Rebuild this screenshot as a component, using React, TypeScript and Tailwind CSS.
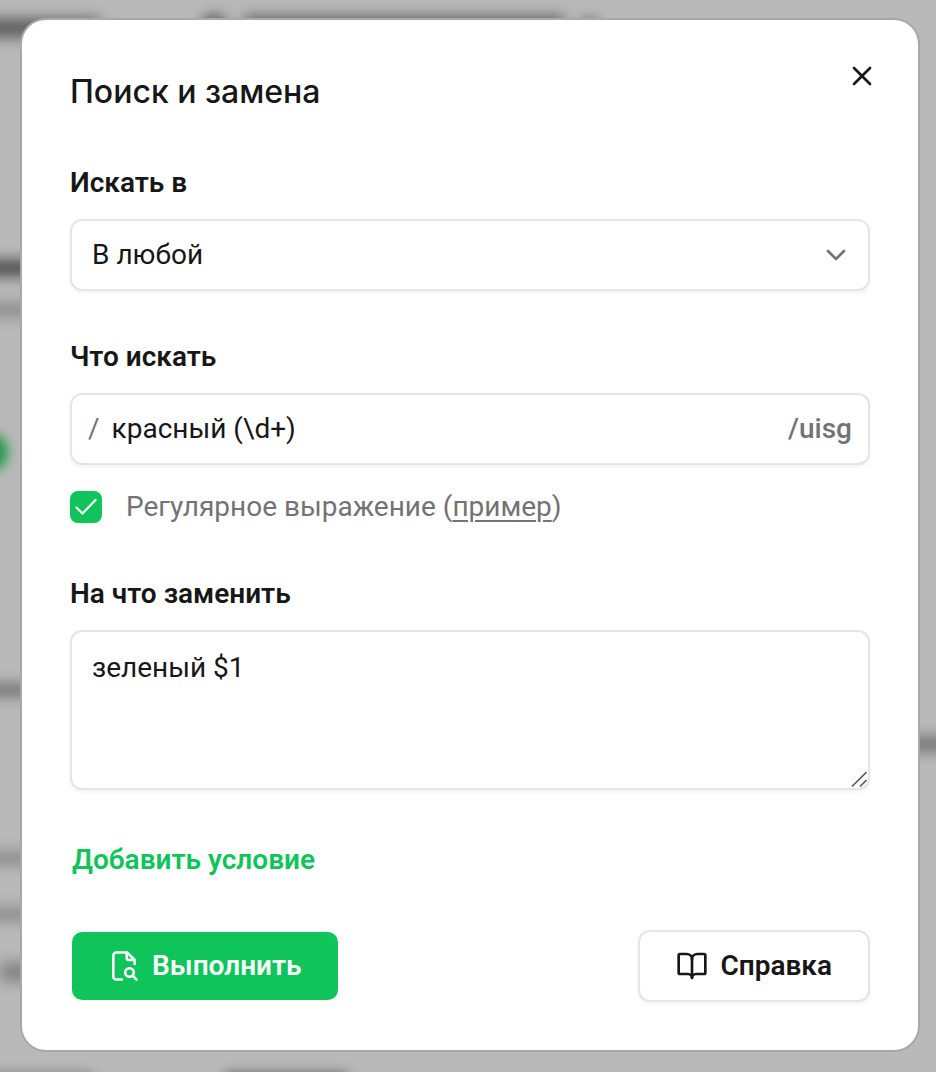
import { useId, useState } from "react";
import { BookOpen, ChevronDown, X } from "lucide-react";

const fieldBox =
  "rounded-xl border-2 border-[#e5e5e5] bg-white shadow-[0_2px_4px_rgba(0,0,0,0.05)]";
const labelText = "text-[28px] leading-9 font-semibold";

function FileSearchIcon() {
  return (
    <svg
      width="32"
      height="32"
      viewBox="0 0 32 32"
      fill="none"
      stroke="currentColor"
      strokeWidth="2.6"
      strokeLinecap="round"
      strokeLinejoin="round"
      aria-hidden="true"
    >
      <path d="M14 29.500H8.300A3 3 0 0 1 5.300 26.500V5.500A3 3 0 0 1 8.300 2.500H19L26.700 10V14" />
      <path d="M18.700 2.800V8A2 2 0 0 0 20.700 10H26.500" />
      <circle cx="21.500" cy="22.500" r="4.300" />
      <path d="M24.700 25.700L28.500 29.600" />
    </svg>
  );
}

function Backdrop() {
  return (
    <div className="absolute inset-0 overflow-hidden bg-[#b9b9b9]" aria-hidden="true">
      <div className="absolute -left-5 top-5 h-4 w-30 bg-[#4a4a4a] blur-[8px]" />
      <div className="absolute left-51 top-4 h-5 w-5 bg-[#4a4a4a] blur-[7px]" />
      <div className="absolute left-61 top-4 h-5 w-80 bg-[#606060] blur-[7px]" />
      <div className="absolute left-[580px] top-4 h-2 w-5 bg-[#888888] blur-[5px]" />
      <div className="absolute -left-5 top-65 h-4 w-20 bg-[#484848] blur-[7px]" />
      <div className="absolute -left-5 top-76 h-3 w-20 bg-[#858585] blur-[7px]" />
      <div className="absolute -left-8 top-108 size-10 rounded-full bg-[#22994b] blur-[6px]" />
      <div className="absolute -left-5 top-171 h-3 w-20 bg-[#6c6c6c] blur-[7px]" />
      <div className="absolute -left-5 top-213 h-3 w-20 bg-[#858585] blur-[7px]" />
      <div className="absolute -left-5 top-227 h-3 w-20 bg-[#858585] blur-[7px]" />
      <div className="absolute left-0 top-241 h-4 w-20 bg-[#757575] blur-[8px]" />
      <div className="absolute -right-5 top-184 h-4 w-20 bg-[#757575] blur-[7px]" />
      <div className="absolute -left-5 top-268 h-4 w-28 bg-[#858585] blur-[6px]" />
      <div className="absolute left-56 top-268 h-4 w-31 bg-[#707070] blur-[6px]" />
    </div>
  );
}

export default function App() {
  const id = useId();
  const [isRegex, setIsRegex] = useState(true);

  return (
    <div className="relative min-h-screen font-[Roboto,sans-serif] text-[#171717]">
      <Backdrop />
      <main className="relative pt-5 pr-[18px] pb-[22px] pl-[22px]">
        <form
          role="dialog"
          aria-labelledby={id + "title"}
          onSubmit={(event) => event.preventDefault()}
          className="flex flex-col rounded-3xl bg-white px-12 py-12 shadow-[0_0_0_2px_#a8a8a8]"
        >
          <header className="flex items-start justify-between">
            <h1
              id={id + "title"}
              className="pt-1 font-[Inter,sans-serif] text-[32px] leading-10 font-medium"
            >
              Поиск и замена
            </h1>
            <button type="button" aria-label="Закрыть" className="-mr-2 -mt-2">
              <X className="size-8" strokeWidth={2} />
            </button>
          </header>

          <div className="mt-[53px] flex flex-col gap-[18px]">
            <label htmlFor={id + "scope"} className={labelText}>
              Искать в
            </label>
            <div className="grid items-center">
              <select
                id={id + "scope"}
                className={fieldBox + " col-start-1 row-start-1 h-18 w-full appearance-none px-5 text-[28px]"}
              >
                <option>В любой</option>
              </select>
              <ChevronDown
                className="pointer-events-none col-start-1 row-start-1 mr-[18px] size-8 justify-self-end text-[#737373]"
                strokeWidth={2}
              />
            </div>
          </div>

          <div className="mt-12 flex flex-col gap-[18px]">
            <label htmlFor={id + "query"} className={labelText}>
              Что искать
            </label>
            <div className={fieldBox + " flex h-18 items-center px-4 text-[28px]"}>
              <span className="text-[#737373]">/</span>
              <input
                id={id + "query"}
                defaultValue="красный (\d+)"
                className="ml-3 min-w-0 flex-1 outline-none"
              />
              <span className="font-medium text-[#737373]">/uisg</span>
            </div>
          </div>

          <div className="mt-6 flex items-center gap-6 text-[28px] leading-9 text-[#737373]">
            <span className="grid size-8 shrink-0">
              <input
                id={id + "regex"}
                type="checkbox"
                checked={isRegex}
                onChange={(event) => setIsRegex(event.target.checked)}
                className="peer col-start-1 row-start-1 size-8 appearance-none rounded-lg border-2 border-[#e5e5e5] shadow-[0_2px_4px_rgba(0,0,0,0.05)] checked:border-[#0fc55b] checked:bg-[#0fc55b]"
              />
              <svg
                viewBox="0 0 32 32"
                className="pointer-events-none invisible col-start-1 row-start-1 size-8 text-white peer-checked:visible"
                fill="none"
                stroke="currentColor"
                strokeWidth="2.2"
                strokeLinecap="round"
                strokeLinejoin="round"
                aria-hidden="true"
              >
                <path d="M6.500 16.500L12.500 22.500L25.500 9" />
              </svg>
            </span>
            <span>
              <label htmlFor={id + "regex"}>Регулярное выражение</label> (
              <a href="#example" className="underline decoration-2 underline-offset-4">
                пример
              </a>
              )
            </span>
          </div>

          <div className="mt-[51px] flex flex-col gap-[18px]">
            <label htmlFor={id + "replacement"} className={labelText}>
              На что заменить
            </label>
            <div className="grid">
              <textarea
                id={id + "replacement"}
                defaultValue="зеленый $1"
                className={fieldBox + " col-start-1 row-start-1 h-40 w-full resize-none px-5 py-4 text-[28px] leading-10"}
              />
              <svg
                width="16"
                height="16"
                viewBox="0 0 16 16"
                className="pointer-events-none col-start-1 row-start-1 mr-[3px] mb-[3px] self-end justify-self-end text-[#5c5c5c]"
                stroke="currentColor"
                strokeWidth="1.6"
                aria-hidden="true"
              >
                <path d="M1 15.500L15.500 1M9 15.500L15.500 9" />
              </svg>
            </div>
          </div>

          <div className="mt-[52px] flex pl-[2px]">
            <button type="button" className={labelText + " text-[#0fc55b]"}>
              Добавить условие
            </button>
          </div>

          <footer className="mt-[52px] flex items-center justify-between pl-[2px]">
            <button
              type="submit"
              className="flex h-17 items-center gap-3 rounded-[10px] bg-[#0fc55b] px-9 text-[28px] font-semibold text-[#fafafa]"
            >
              <FileSearchIcon />
              Выполнить
            </button>
            <button
              type="button"
              className={fieldBox + " flex h-18 items-center gap-3 px-9 text-[28px] font-semibold"}
            >
              <BookOpen className="size-8" strokeWidth={2} />
              Справка
            </button>
          </footer>
        </form>
      </main>
    </div>
  );
}
